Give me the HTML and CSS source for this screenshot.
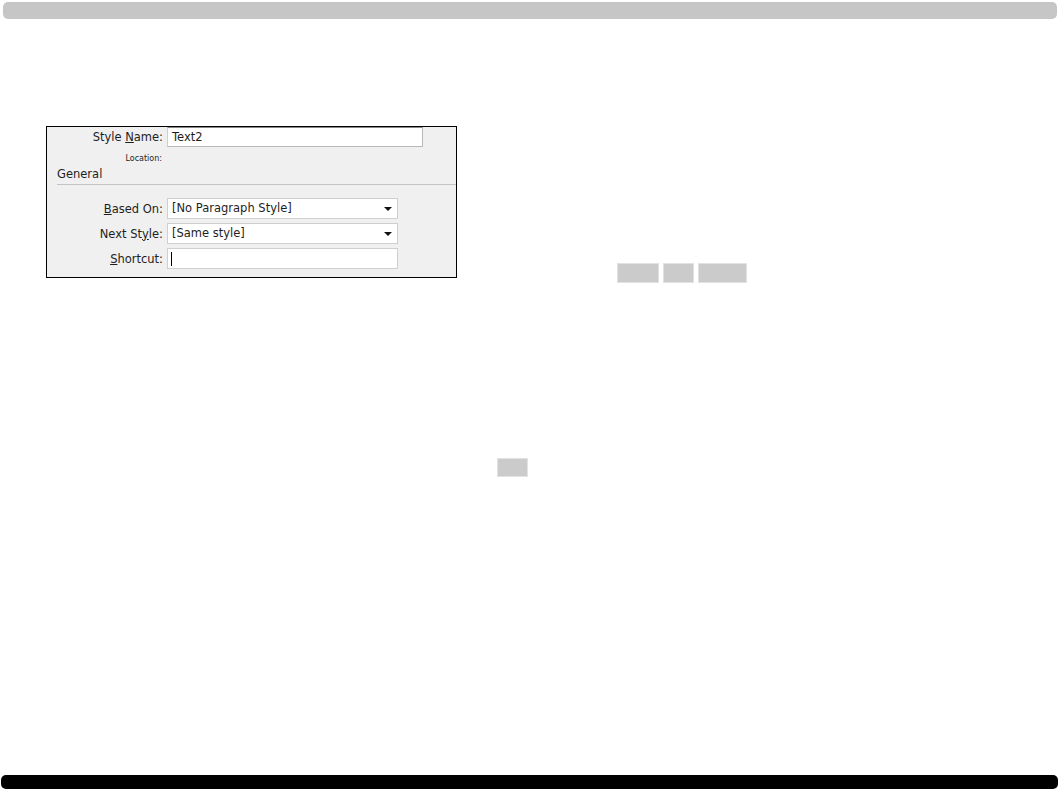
FILE: index.html
```html
<!DOCTYPE html>
<html>
<head>
<meta charset="utf-8">
<link rel="stylesheet" href="styles.css">
</head>
<body>
<div class="page">
  <div class="topbar"></div>
  <div class="content">
    <div class="dialog">
      <div class="row name-row">
        <span class="label">Style <u>N</u>ame:</span>
        <div class="field name-field">Text2</div>
      </div>
      <div class="row loc-row">
        <span class="label small">Location:</span>
        <span></span>
      </div>
      <div class="section">General</div>
      <div class="sep"></div>
      <div class="fields">
        <div class="row">
          <span class="label"><u>B</u>ased On:</span>
          <div class="field select">[No Paragraph Style]<span class="arrow"></span></div>
        </div>
        <div class="row">
          <span class="label">Next St<u>y</u>le:</span>
          <div class="field select">[Same style]<span class="arrow"></span></div>
        </div>
        <div class="row">
          <span class="label"><u>S</u>hortcut:</span>
          <div class="field select"><span class="caret"></span></div>
        </div>
      </div>
    </div>
    <div class="side">
      <div class="chips">
        <div class="chip w42"></div>
        <div class="chip w31"></div>
        <div class="chip w49"></div>
      </div>
      <div class="chip single"></div>
    </div>
  </div>
  <div class="bottombar"></div>
</div>
</body>
</html>
```
FILE: styles.css
```css
html, body {
  margin: 0;
  padding: 0;
  background: #ffffff;
}
.page {
  width: 1060px;
  height: 790px;
  display: flex;
  flex-direction: column;
  font-family: "DejaVu Sans", Verdana, sans-serif;
  color: #1e1e1e;
}
.topbar {
  margin: 2px 3px 0 3px;
  height: 17px;
  background: #c6c6c6;
  border-radius: 5px;
}
.content {
  display: flex;
  flex: 1;
}
.dialog {
  margin-top: 107px;
  margin-left: 46px;
  width: 409px;
  height: 150px;
  border: 1px solid #000;
  background: #f0f0f0;
  box-sizing: content-box;
  display: flex;
  flex-direction: column;
}
.row {
  display: grid;
  grid-template-columns: 116px 1fr;
  column-gap: 4px;
  align-items: center;
}
.label {
  text-align: right;
  font-size: 11.5px;
  white-space: nowrap;
}
.label.small {
  font-size: 8px;
  padding-right: 1px;
}
.field {
  height: 20px;
  box-sizing: border-box;
  background: #fff;
  border: 1px solid #cfcfcf;
  font-size: 11.5px;
  line-height: 18px;
  padding-left: 4px;
  position: relative;
}
.name-field {
  width: 256px;
  border-top-color: #888;
  border-right-color: #b8b8b8;
  border-bottom-color: #b8b8b8;
}
.loc-row {
  margin-top: 5px;
  height: 12px;
}
.section {
  margin-top: 3px;
  margin-left: 10px;
  font-size: 11.5px;
  line-height: 14px;
}
.sep {
  margin-top: 3px;
  margin-left: 10px;
  height: 1px;
  background: #c4c4c4;
}
.fields {
  margin-top: 13px;
  display: flex;
  flex-direction: column;
  gap: 4px;
}
.select {
  width: 231px;
  height: 21px;
  line-height: 19px;
}
.arrow {
  position: absolute;
  right: 5px;
  top: 8px;
  width: 0;
  height: 0;
  border-left: 4px solid transparent;
  border-right: 4px solid transparent;
  border-top: 4px solid #111;
}
.caret {
  position: absolute;
  left: 3px;
  top: 3px;
  width: 1px;
  height: 14px;
  background: #000;
}
.side {
  margin-left: 40px;
  display: flex;
  flex-direction: column;
}
.chips {
  margin-top: 244px;
  margin-left: 120px;
  display: flex;
  gap: 4px;
}
.chip {
  height: 20px;
  background: #cbcbcb;
  border: 1px solid #e2e2e2;
  box-sizing: border-box;
}
.w42 { width: 42px; }
.w31 { width: 31px; }
.w49 { width: 49px; }
.single {
  margin-top: 175px;
  width: 31px;
  height: 19px;
}
.bottombar {
  margin: 0 2px 1px 1px;
  height: 14px;
  background: #000;
  border-radius: 5px;
}
```
